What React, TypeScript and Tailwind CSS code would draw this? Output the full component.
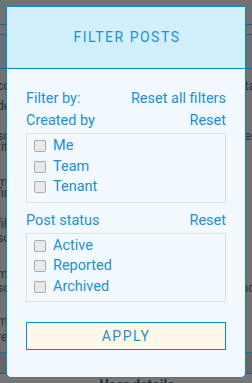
import React from 'react';

const createdBy = ['Me', 'Team', 'Tenant'];
const postStatus = ['Active', 'Reported', 'Archived'];

// dimmed page rows behind the overlay: [left word, right word]
const pageRows: [string, string][] = [
    ['contact', 'data'],
    ['details', ''],
    ['some', 'user'],
    ['title', ''],
    ['member', '|'],
    ['firm', ''],
    ['file', ''],
    ['some', ''],
    ['member', ''],
    ['some', 'trend'],
    ['member', ''],
    ['report', ''],
];

const rowTops = [81, 101, 131, 142, 177, 188, 219, 233, 269, 283, 316, 332];

const CheckRow: React.FC<{ label: string }> = ({ label }) => (
    <label className="flex items-center h-[20.5px] pl-[7px] gap-[7px] cursor-pointer">
        <span className="block w-[12px] h-[12px] rounded-[2px] border border-[#a9a9a9] bg-[#e9e9e9]" />
        <span className="text-[14.5px] leading-none text-[#1e8fd1]">{label}</span>
    </label>
);

const Section: React.FC<{ title: string; items: string[]; className?: string }> = ({ title, items, className }) => (
    <div className={className}>
        <div className="flex items-center justify-between h-[22px] text-[14.5px] text-[#1e8fd1]">
            <span>{title}</span>
            <span>Reset</span>
        </div>
        <div className="mt-[1px] border border-[#dcdfe1] pt-[2px] pb-[4px]">
            {items.map((item) => (
                <CheckRow key={item} label={item} />
            ))}
        </div>
    </div>
);

const App: React.FC = () => {
    return (
        <div
            className="relative w-[252px] h-[383px] overflow-hidden bg-[#717171]"
            style={{ fontFamily: 'Roboto, "Noto Sans", sans-serif' }}
        >
            {/* Dimmed page behind the modal */}
            <div className="flex flex-col">
                <div className="h-[24px]" />
                <div className="h-[1px] bg-[#1f5c80]" />
                <div className="h-[9px]" />
                <div className="h-[1px] bg-[#1f5c80]" />
                <div className="h-[33px] bg-[#66717a]" />
                <div className="h-[1px] bg-[#1f6a95]" />
            </div>
            {pageRows.map(([left, right], i) => (
                <div
                    key={i}
                    className="absolute left-[-3px] right-[-3px] flex justify-between text-[12px] leading-[10px] text-[#2e2e2e]"
                    style={{ top: rowTops[i] }}
                >
                    <span>{left}</span>
                    <span>{right}</span>
                </div>
            ))}
            <div className="absolute left-0 right-0 top-[352px] flex flex-col">
                <div className="h-[1px] bg-[#1f6a95]" />
                <div className="h-[20px] bg-[#666666]" />
                <div className="h-[1px] bg-[#1f5c80]" />
                <div className="h-[10px] bg-[#767676] flex justify-center">
                    <span className="ml-[22px] mt-[4px] text-[14px] font-bold leading-[14px] text-[#1c2e4a] underline">
                        User details
                    </span>
                </div>
            </div>

            {/* Modal */}
            <div className="absolute left-[6px] top-[6px] w-[240px] h-[372px] flex flex-col border border-[#0b87c9] rounded-b-[5px] bg-[#f2faff] overflow-hidden">
                <div className="h-[62px] shrink-0 flex items-center justify-center bg-[#d2effc] border-b border-[#0b87c9]">
                    <h2 className="text-[14px] font-normal tracking-[1.5px] text-[#1e8fd1] ml-[2px]">FILTER POSTS</h2>
                </div>
                <div className="px-[19px] pt-[19px] flex flex-col">
                    <div className="flex items-center justify-between h-[22px] text-[14.5px] text-[#1e8fd1]">
                        <span>Filter by:</span>
                        <span>Reset all filters</span>
                    </div>
                    <Section title="Created by" items={createdBy} />
                    <Section title="Post status" items={postStatus} className="mt-[7px]" />
                    <button className="mt-[20px] h-[28px] w-full border border-[#0b87c9] bg-[#fef8e9] text-[14px] tracking-[1.5px] text-[#1e8fd1]">
                        APPLY
                    </button>
                </div>
            </div>
        </div>
    );
};

export default App;
